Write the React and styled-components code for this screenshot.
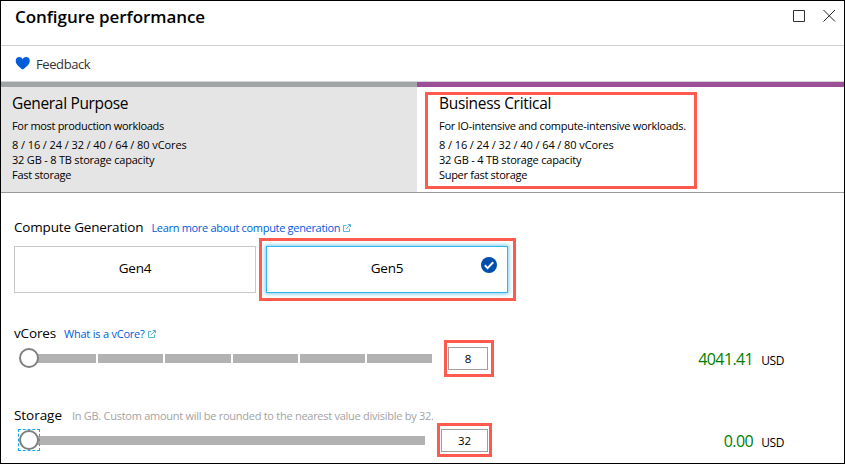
import React from 'react';
import styled, { createGlobalStyle, css } from 'styled-components';

const GlobalStyle = createGlobalStyle`
  *, *::before, *::after { box-sizing: border-box; }
  body { margin: 0; background: #fff; }
`;

const Panel = styled.main`
  display: flex;
  flex-direction: column;
  width: 845px;
  height: 464px;
  border: 1px solid #000;
  background: #fff;
  color: #000;
  font-family: 'Open Sans', 'Noto Sans', sans-serif;
  overflow: hidden;
`;

const Text = styled.span`
  font-size: ${(p) => p.$size}px;
  letter-spacing: ${(p) => p.$track || 0}px;
  line-height: ${(p) => p.$line || 20}px;
  white-space: nowrap;
`;

const Header = styled.header`
  display: flex;
  justify-content: space-between;
  align-items: flex-start;
  height: 45px;
  padding: 4px 8px 0 14px;
  border-bottom: 1px solid #d0d0d0;
`;

const Title = styled.h1`
  margin: 0;
  font-size: 17px;
  font-weight: 600;
  letter-spacing: -0.06px;
  line-height: 24px;
`;

const WindowButtons = styled.div`
  display: flex;
  gap: 18px;
  padding-top: 4px;
`;

const WindowButton = styled.button`
  display: flex;
  padding: 0;
  border: 0;
  background: none;
`;

const Toolbar = styled.div`
  display: flex;
  align-items: center;
  gap: 6px;
  height: 36px;
  padding-left: 14px;
  border-bottom: 1px solid #d3d6d6;
  color: #333;
`;

const Tiers = styled.div`
  display: grid;
  grid-template-columns: 416px 1fr;
  height: 111px;
  border-bottom: 1px solid #999;
`;

const Tier = styled.section`
  display: flex;
  flex-direction: column;
  align-items: flex-start;
  border-top: 5px solid ${(p) => (p.$active ? '#9b4f96' : '#a0a5a6')};
  background: ${(p) => (p.$active ? '#fff' : '#e5e5e5')};
  padding: ${(p) => (p.$active ? '5px 0 0 8px' : '6px 0 0 11px')};
`;

const Highlight = styled.div`
  flex: none;
  border: 3px solid #ff5a4e;
`;

const TierHighlight = styled(Highlight)`
  width: 272px;
  height: 97px;
  padding-left: 11px;
`;

const TierText = styled.div`
  display: flex;
  flex-direction: column;
  margin-top: ${(p) => (p.$boxed ? '-2px' : '0')};
`;

const Summary = styled.div`
  display: flex;
  margin: 5px 0 4px;
`;

const Body = styled.div`
  display: flex;
  flex-direction: column;
  padding: 24px 0 0 13px;
`;

const LabelRow = styled.div`
  display: flex;
  align-items: baseline;
  height: 20px;
  gap: ${(p) => p.$gap || 8}px;
`;

const Link = styled.a`
  display: inline-flex;
  align-items: baseline;
  gap: 3px;
  color: #015cda;
`;

const Hint = styled.span`
  display: flex;
  color: #a3a3a3;
`;

const Generations = styled.div`
  display: flex;
  align-items: center;
  gap: 3px;
  height: 63px;
  margin-top: 1px;
`;

const GenerationHighlight = styled(Highlight)`
  width: 257px;
  height: 63px;
  padding: 5px 4px;
`;

const Generation = styled.button`
  display: grid;
  grid-template-columns: 1fr auto 1fr;
  align-items: center;
  width: 242px;
  height: 47px;
  padding: 0 10px 3px;
  background: #fff;
  border: 1px solid #c8c8c8;
  color: #000;
  font-family: inherit;
  ${(p) =>
    p.$selected &&
    css`
      border-color: #32b4ee;
      box-shadow: 0 0 4px 1px #7fcdf5;
    `}
`;

const CheckSlot = styled.span`
  display: flex;
  justify-content: flex-end;
  padding-bottom: 7px;
`;

const Setting = styled.section`
  display: flex;
  flex-direction: column;
  margin-top: ${(p) => p.$top}px;
`;

const ControlRow = styled.div`
  display: flex;
  align-items: center;
  width: 770px;
  height: 31px;
`;

const Slider = styled.div`
  position: relative;
  display: flex;
  flex: none;
  gap: 2px;
  width: ${(p) => p.$width}px;
  height: 9px;
  margin-left: 5px;
  padding-left: 12px;
`;

const Segment = styled.div`
  flex: 1;
  background: #b2b2b2;
`;

const Knob = styled.div`
  position: absolute;
  left: 0;
  top: -6px;
  width: 20px;
  height: 20px;
  border: 2px solid #808080;
  border-radius: 50%;
  background: #fff;
`;

const FocusRing = styled.div`
  position: absolute;
  left: -1px;
  top: -7px;
  width: 22px;
  height: 22px;
  border: 1px dashed #12aaeb;
`;

const ValueHighlight = styled(Highlight)`
  width: ${(p) => p.$width}px;
  height: ${(p) => p.$height}px;
  margin: ${(p) => p.$lift || 0}px 0 0 12px;
  padding: ${(p) => p.$pad};
`;

const ValueInput = styled.input`
  display: block;
  width: 100%;
  height: 23px;
  padding: 0;
  border: 1px solid #a0a0a0;
  border-radius: 0;
  background: #fff;
  color: #000;
  font: 11.5px 'Open Sans', 'Noto Sans', sans-serif;
  text-align: center;
`;

const Price = styled.div`
  display: flex;
  flex: 1;
  align-items: baseline;
  justify-content: flex-end;
  gap: 8px;
  padding-top: 3px;
`;

const Amount = styled(Text)`
  color: #008000;
`;

const ExternalIcon = () => (
  <svg width="8" height="8" viewBox="0 0 8 8" fill="none" stroke="#45acd5" strokeWidth="0.9">
    <path d="M3.4 1.5H0.5V7.5H6.5V4.6M2.8 5.2L7.3 0.7M4.9 0.5H7.5V3.1" />
  </svg>
);

const specs = (storage, speed, speedTrack) => [
  ['8 / 16 / 24 / 32 / 40 / 64 / 80 vCores', -0.09],
  [storage, -0.2],
  [speed, speedTrack],
];

function TierContent({ name, nameTrack, summary, summaryTrack, lines, boxed }) {
  return (
    <TierText $boxed={boxed}>
      <Text $size={15.5} $track={nameTrack}>{name}</Text>
      <Summary>
        <Text $size={11} $track={summaryTrack} $line={15}>{summary}</Text>
      </Summary>
      {lines.map(([line, track]) => (
        <Text key={line} $size={11} $track={track} $line={15}>{line}</Text>
      ))}
    </TierText>
  );
}

function PriceTag({ amount, track }) {
  return (
    <Price>
      <Amount $size={16} $track={track}>{amount}</Amount>
      <Text $size={12} $track={-0.4}>USD</Text>
    </Price>
  );
}

export default function App() {
  return (
    <>
      <GlobalStyle />
      <Panel>
        <Header>
          <Title>Configure performance</Title>
          <WindowButtons>
            <WindowButton aria-label="Maximize">
              <svg width="13" height="13" viewBox="0 0 13 13" fill="none" stroke="#333">
                <path d="M1.5 1.5H12.5V12.5H1.5Z" />
              </svg>
            </WindowButton>
            <WindowButton aria-label="Close">
              <svg width="13" height="13" viewBox="0 0 13 13" fill="none" stroke="#222">
                <path d="M0.5 1L12 12.5M12 1L0.5 12.5" />
              </svg>
            </WindowButton>
          </WindowButtons>
        </Header>

        <Toolbar>
          <svg width="15" height="13" viewBox="0 0 15 13" fill="#015cda">
            <path d="M7.7 12.6C5.4 10.7 0.7 7.6 0.7 3.9C0.7 1.6 2.2 0 4.2 0C5.8 0 7.1 0.9 7.7 2.2C8.3 0.9 9.6 0 11.2 0C13.3 0 14.8 1.6 14.8 3.9C14.8 7.6 10 10.7 7.7 12.6Z" />
          </svg>
          <Text $size={13} $track={-0.4}>Feedback</Text>
        </Toolbar>

        <Tiers>
          <Tier>
            <TierContent
              name="General Purpose"
              nameTrack={-0.33}
              summary="For most production workloads"
              summaryTrack={-0.31}
              lines={specs('32 GB - 8 TB storage capacity', 'Fast storage', -0.27)}
            />
          </Tier>
          <Tier $active>
            <TierHighlight>
              <TierContent
                boxed
                name="Business Critical"
                nameTrack={-0.3}
                summary="For IO-intensive and compute-intensive workloads."
                summaryTrack={-0.27}
                lines={specs('32 GB - 4 TB storage capacity', 'Super fast storage', -0.3)}
              />
            </TierHighlight>
          </Tier>
        </Tiers>

        <Body>
          <LabelRow>
            <Text $size={13.5} $track={-0.17}>Compute Generation</Text>
            <Link>
              <Text $size={11} $track={-0.31}>Learn more about compute generation</Text>
              <ExternalIcon />
            </Link>
          </LabelRow>
          <Generations>
            <Generation>
              <span />
              <Text $size={13.5} $track={-0.2}>Gen4</Text>
            </Generation>
            <GenerationHighlight>
              <Generation $selected>
                <span />
                <Text $size={13.5} $track={-0.2}>Gen5</Text>
                <CheckSlot>
                  <svg width="16" height="16" viewBox="0 0 16 16" fill="none">
                    <circle cx="8" cy="8" r="8" fill="#004fad" />
                    <path d="M3.8 8.3L6.6 11.1L12.2 5.3" stroke="#fff" strokeWidth="2" />
                  </svg>
                </CheckSlot>
              </Generation>
            </GenerationHighlight>
          </Generations>

          <Setting $top={22}>
            <LabelRow>
              <Text $size={13.5} $track={-0.15}>vCores</Text>
              <Link>
                <Text $size={11} $track={-0.22}>What is a vCore?</Text>
                <ExternalIcon />
              </Link>
            </LabelRow>
            <ControlRow>
              <Slider $width={413}>
                {[0, 1, 2, 3, 4, 5].map((i) => <Segment key={i} />)}
                <Knob />
              </Slider>
              <ValueHighlight $width={50} $height={37} $pad="4px 3px 4px 1px">
                <ValueInput defaultValue="8" aria-label="vCores" />
              </ValueHighlight>
              <PriceTag amount="4041.41" track={-0.6} />
            </ControlRow>
          </Setting>

          <Setting $top={31}>
            <LabelRow $gap={10}>
              <Text $size={13.5} $track={-0.05}>Storage</Text>
              <Hint>
                <Text $size={11} $track={-0.27}>
                  In GB. Custom amount will be rounded to the nearest value divisible by 32.
                </Text>
              </Hint>
            </LabelRow>
            <ControlRow>
              <Slider $width={406}>
                <Segment />
                <FocusRing />
                <Knob />
              </Slider>
              <ValueHighlight $width={55} $height={34} $lift={-1} $pad="3px 1px 2px 1px">
                <ValueInput defaultValue="32" aria-label="Storage in GB" />
              </ValueHighlight>
              <PriceTag amount="0.00" track={-0.55} />
            </ControlRow>
          </Setting>
        </Body>
      </Panel>
    </>
  );
}
